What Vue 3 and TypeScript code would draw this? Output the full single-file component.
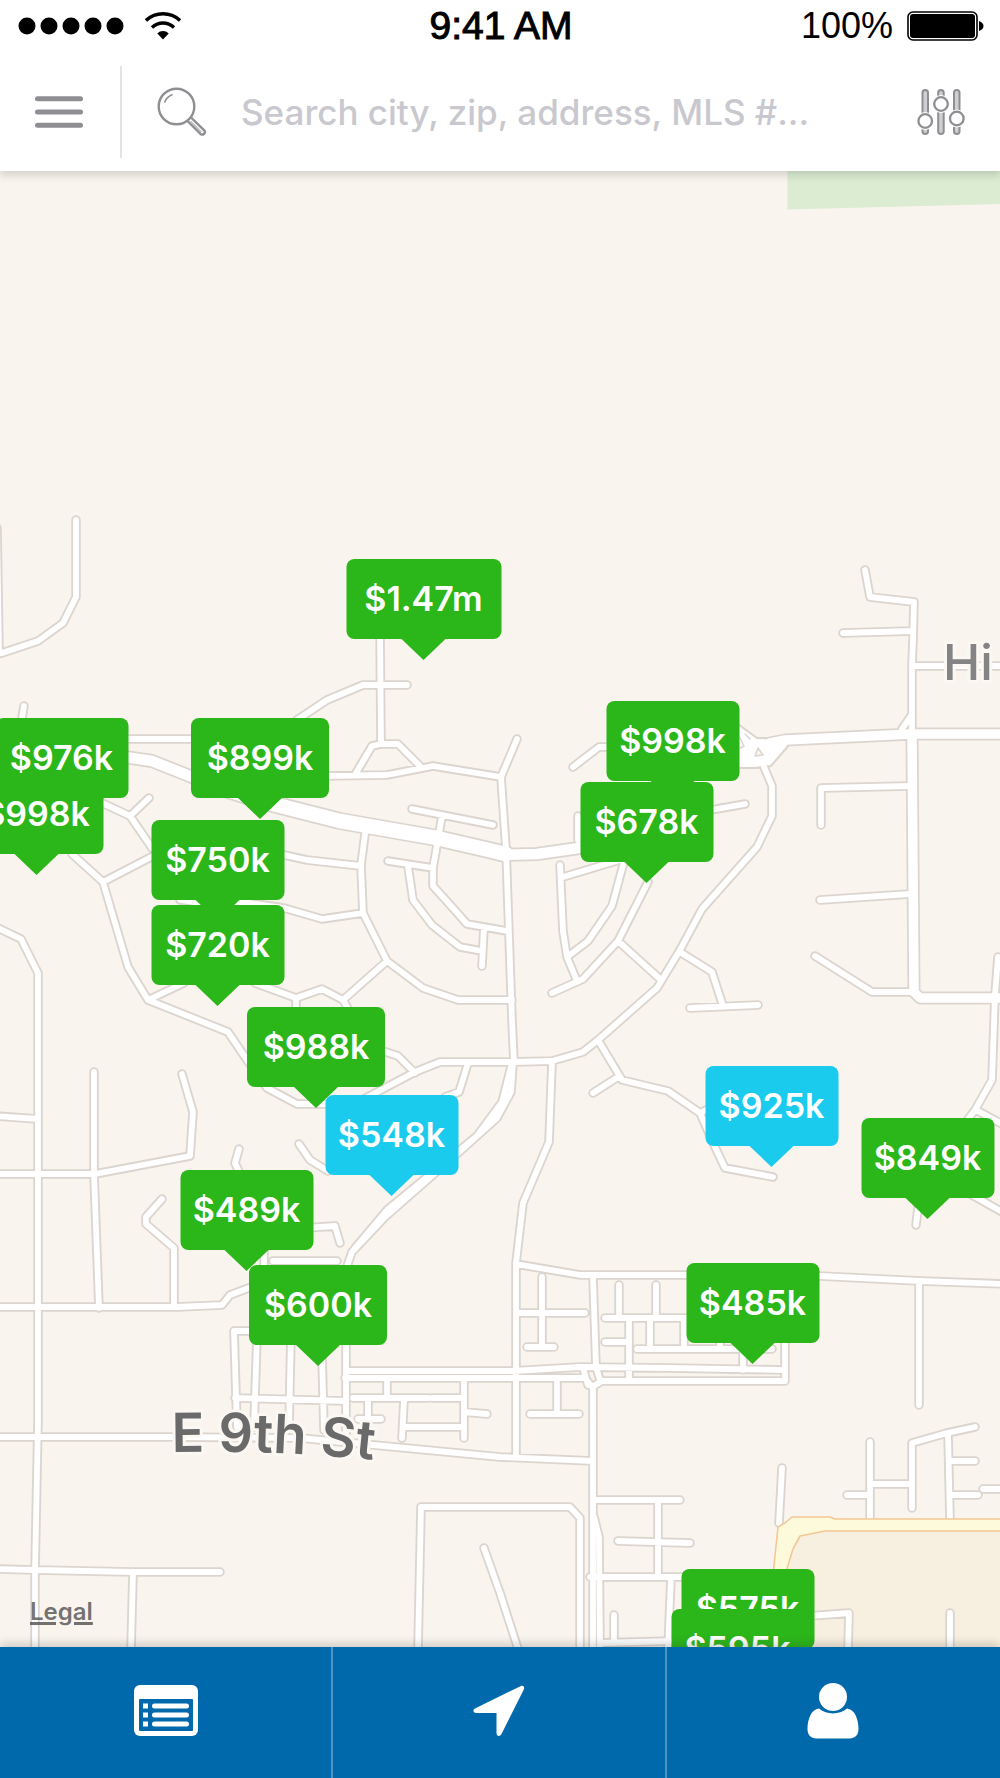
<script setup lang="ts">
import { ref } from 'vue'

interface Listing {
  price: string
  x: number
  y: number
  width: number
  viewed?: boolean
}

/* Map canvas: x runs 0-1000, y runs 171-1647 */
const MAP_TOP = 171
const MAP_WIDTH = 1000
const MAP_HEIGHT = 1476

/* x and y give the middle of each label's bottom edge */
const listings: Listing[] = [
  { price: '$1.47m', x: 423.5, y: 639, width: 155 },
  { price: '$976k', x: 61.5, y: 798, width: 133 },
  { price: '$998k', x: 36.5, y: 854, width: 133 },
  { price: '$899k', x: 260, y: 798, width: 138 },
  { price: '$750k', x: 217.5, y: 900, width: 133 },
  { price: '$720k', x: 217.5, y: 985, width: 133 },
  { price: '$998k', x: 672.5, y: 781, width: 133 },
  { price: '$678k', x: 646.5, y: 862, width: 133 },
  { price: '$988k', x: 316, y: 1087, width: 138 },
  { price: '$548k', x: 391.5, y: 1175, width: 133, viewed: true },
  { price: '$925k', x: 771.5, y: 1146, width: 133, viewed: true },
  { price: '$849k', x: 927.5, y: 1198, width: 133 },
  { price: '$489k', x: 246.5, y: 1250, width: 133 },
  { price: '$600k', x: 318, y: 1345, width: 138 },
  { price: '$485k', x: 752.5, y: 1343, width: 133 },
  { price: '$575k', x: 747.5, y: 1649, width: 133 },
  { price: '$595k', x: 737.5, y: 1689, width: 133 },
]

const place = (l: Listing) => ({
  left: `${(l.x / MAP_WIDTH) * 100}%`,
  top: `${((l.y - MAP_TOP) / MAP_HEIGHT) * 100}%`,
  width: `${l.width}px`,
})

const streets = [
  /* north west */
  'M-4 654L2 653L38 641L63 623L76 597V520', 'M-3 528L-1 650', 'M24 706L20 730', 'M100 739H260',
  'M100 802L130 816L152 848', 'M149 798L130 816', 'M72 854L103 882L155 855',
  'M103 882L128 967L148 1000L228 1032L247 1060L267 1088L297 1104H330', 'M148 1000L184 983',
  'M255 983L296 998L322 989L343 1000L387 961', 'M296 998V1015', 'M343 1000L350 1012',
  'M275 853L307 860L361 866', 'M180 900L200 903H250L284 908L322 919L363 913',
  'M-4 927L21 939L38 973V1420L35 1572V1650',
  'M297 720L327 700L363 685H407', 'M320 776L387 775L433 766L501 777L517 739',
  'M380 630L381 744L372 746L356 773', 'M381 744H398L420 766',
  'M501 777L506 849L512 1020L514 1063', 'M412 809L493 825', 'M442 816L433 868V886L452 907L467 924L507 931',
  'M388 861L433 868', 'M408 866L413 900L432 925L460 947L482 951', 'M484 927L482 966',
  'M365 834L361 865L363 913L387 961L423 988L458 1000H512', 'M380 1050L398 1056L415 1073',
  /* centre */
  'M362 1100L415 1072L440 1062H513L552 1061L583 1052L598 1040L657 988L680 950L702 909L757 847L772 816V786L762 762',
  'M468 1063L459 1092L445 1097', 'M513 1063L511 1092L497 1118L458 1153L385 1217L352 1252L345 1272',
  'M512 1063L502 1102L477 1136L387 1210L355 1248',
  'M552 1062L549 1142L523 1203L516 1263V1456',
  'M598 1040L622 1080L668 1091L700 1113L715 1147L725 1168L773 1177', 'M593 1093L618 1077', 'M700 1113L712 1107',
  'M516 1264L580 1275H700L820 1276L920 1281L1004 1284', 'M919 1282V1405',
  'M573 767L599 747H612', 'M578 816V840', 'M560 865L563 931L567 957L577 981', 'M563 877L623 859',
  'M625 858L612 906L588 941L567 957', 'M552 993L583 979L618 941L648 882', 'M618 941L660 979',
  'M680 952L712 972L723 1006', 'M690 1008L758 1005', 'M705 811L745 804',
  /* north east */
  'M865 570L870 597L914 602L913 640L912 666V730', 'M843 633L913 631', 'M913 666H1004', 'M902 729L911 716',
  'M821 825V788L910 786', 'M820 900L910 894', 'M815 956L872 992H912',
  'M998 957L995 995L992 1080L975 1110L966 1122', 'M976 1110L1004 1125', 'M965 1191L1004 1213', 'M919 1200L916 1225',
  /* west */
  'M-4 1116L38 1119', 'M-4 1174H95L190 1156L193 1112L182 1074', 'M94 1072V1174L99 1308', 'M-4 1307H177L222 1305L230 1295L254 1286',
  'M162 1199L146 1217V1224L174 1248V1307', 'M239 1149L235 1163L240 1174', 'M299 1144L310 1160L328 1171',
  'M305 1228L335 1226L340 1243', 'M273 1261H337', 'M264 1250V1275',
  'M256 1331H234L237 1427', 'M257 1335L254 1427', 'M291 1335L289 1427', 'M322 1355L324 1430', 'M235 1398L346 1401',
  /* grid */
  'M346 1335V1444', 'M346 1371H513L580 1367L670 1368L785 1370', 'M345 1378H585L592 1387L602 1381H785V1335',
  'M583 1368L588 1385', 'M593 1277L596 1367L600 1380', 'M593 1387V1650', 'M594 1517L599 1537L600 1650',
  'M353 1398H428', 'M432 1398H463', 'M387 1379V1398', 'M464 1378V1438', 'M464 1412L487 1414', 'M368 1398V1419',
  'M358 1419H381', 'M404 1400L402 1438', 'M403 1427H464', 'M557 1378V1414', 'M530 1414H579',
  'M542 1277V1347', 'M518 1313H585', 'M527 1347H554', 'M619 1285V1317', 'M656 1285V1317', 'M605 1318H700',
  'M605 1342H628', 'M629 1318V1379', 'M650 1318V1349', 'M637 1349H772', 'M684 1318V1349', 'M720 1330V1349', 'M743 1340V1370',
  /* south */
  'M-4 1437H173L300 1438L500 1457L593 1461', 'M-4 1569L35 1570L133 1572H220', 'M133 1573L131 1650',
  'M418 1650L421 1507H570L580 1518V1650', 'M484 1548L500 1593L519 1652', 'M597 1500H680', 'M658 1500V1577',
  'M618 1541L690 1543', 'M590 1577H700', 'M671 1577L668 1650', 'M614 1615V1642', 'M600 1643L672 1641',
  'M782 1468L779 1523', 'M870 1442V1521', 'M847 1495H870', 'M870 1484H912', 'M912 1508V1443L947 1433L975 1427',
  'M948 1433L950 1521', 'M949 1461H975', 'M950 1495H978', 'M983 1489H1004', 'M810 1616L849 1613L848 1650', 'M950 1613V1650',
].join('')

const avenues = ['M770 743L785 740L912 734H1004', 'M912 734L914 992L920 998H1004'].join('')
const highway = 'M215 786L273 804L340 821L437 838L506 854'
const highwayEnds = ['M118 756L152 761L215 786', 'M500 855L537 854L600 845'].join('')

const query = ref('')
</script>

<template>
  <div class="app">
    <header class="top">
      <div class="status">
        <div class="status-left">
          <svg width="106" height="18" viewBox="0 0 106 18" aria-hidden="true">
            <circle v-for="n in 5" :key="n" :cx="9 + (n - 1) * 22" cy="9" r="8.500" />
          </svg>
          <svg width="36" height="28" viewBox="0 0 36 28" fill="none" stroke="#000" stroke-width="3.400" aria-hidden="true">
            <path d="M1 8.500C10.500 -.5 25.500 -.5 35 8.500" />
            <path d="M7 15.500C13.500 9.500 22.500 9.500 29 15.500" />
            <path d="M12.300 21.500C15.500 18.200 20.500 18.200 23.700 21.500L18 27.500Z" fill="#000" stroke="none" />
          </svg>
        </div>
        <span class="time">9:41 AM</span>
        <div class="status-right">
          <span class="percent">100%</span>
          <svg width="77" height="30" viewBox="0 0 77 30" aria-hidden="true">
            <rect x="1" y="1" width="69" height="28" rx="5" fill="#fff" stroke="#000" stroke-width="1.600" />
            <rect x="3" y="3" width="65" height="24" rx="3" fill="#000" />
            <path d="M72 10C78 12 78 18 72 20Z" fill="#000" />
          </svg>
        </div>
      </div>

      <div class="search-row">
        <button class="menu" type="button" aria-label="Menu">
          <svg width="48" height="32" viewBox="0 0 48 32" aria-hidden="true">
            <path d="M2.500 2.800H45.500M2.500 16H45.500M2.500 29.300H45.500" stroke="#8f8f93" stroke-width="5" stroke-linecap="round" />
          </svg>
        </button>
        <label class="search">
          <svg width="50" height="50" viewBox="0 0 50 50" fill="none" stroke="#8f8f93" stroke-width="2.400" aria-hidden="true">
            <circle cx="19.500" cy="19.500" r="17.800" />
            <path d="M7.500 15.500C9 11.500 11.500 9 15.500 7.500" stroke-width="1.600" />
            <path d="M30 33.500L43.500 46.800C46 49 49.300 45.700 47.200 43.300L33.500 30" />
            <path d="M33.500 34L44.500 45" stroke-width="1" />
          </svg>
          <input v-model="query" type="text" placeholder="Search city, zip, address, MLS #..." aria-label="Search listings" />
        </label>
        <button class="filters" type="button" aria-label="Filters">
          <svg width="48" height="48" viewBox="0 0 48 48" fill="#cfcfd2" stroke="#8f8f93" stroke-width="2" aria-hidden="true">
            <rect x="5.500" y="2" width="5.500" height="44" rx="2.750" />
            <rect x="21.200" y="2" width="5.500" height="44" rx="2.750" />
            <rect x="37" y="2" width="5.500" height="44" rx="2.750" />
            <g stroke="#fff" fill="#fff" stroke-width="3">
              <circle cx="8.200" cy="33" r="7.500" /><circle cx="24" cy="16" r="7.500" /><circle cx="39.800" cy="30.500" r="7.500" />
            </g>
            <g fill="#fff" stroke-width="2.300">
              <circle cx="8.200" cy="33" r="6.800" /><circle cx="24" cy="16" r="6.800" /><circle cx="39.800" cy="30.500" r="6.800" />
            </g>
          </svg>
        </button>
      </div>
    </header>

    <main class="map">
      <div class="canvas">
        <svg class="terrain" viewBox="0 171 1000 1476" fill="none" stroke-linecap="round" stroke-linejoin="round" aria-hidden="true">
          <path d="M787.500 165H1001V204L787.500 209.500Z" fill="#dbecd2" />
          <path d="M786 1570L800 1536L825 1531H1001V1650H780Z" fill="#f7efdf" />
          <g stroke="#dcd5cf">
            <path :d="streets" stroke-width="9.500" />
            <path :d="avenues" stroke-width="13" />
            <path :d="highwayEnds" stroke-width="14" />
            <path :d="highway" stroke-width="18" />
            <path d="M738 724L757 738H786L790 744L771 766L757 768H738Z" stroke-width="2" />
          </g>
          <g stroke="#fff">
            <path :d="streets" stroke-width="5.800" />
            <path :d="avenues" stroke-width="9.500" />
            <path :d="highwayEnds" stroke-width="10.500" />
            <path :d="highway" stroke-width="14.500" />
          </g>
          <path d="M739 727L757 739.500H785L788 744L770 765L757 766.500H739Z" fill="#fff" />
          <path d="M758 748L763 755L755 756Z" fill="#f9f4ed" stroke="#dcd5cf" stroke-width="1.500" />
          <path d="M740 738L744 746L740 748M745 734L750 739" stroke="#dcd5cf" stroke-width="1.500" />
          <path
            d="M773 1575L778 1527L785 1523L792 1517H830L835 1519H1004V1531H825L800 1536L793 1549L785 1575Z"
            fill="#fdfadb" stroke="#f3c894" stroke-width="1.600"
          />
          <text x="943" y="680" class="place">Hi</text>
          <path id="street-curve" d="M172 1452C240 1451 310 1452 400 1463" />
          <text class="street"><textPath href="#street-curve">E 9th St</textPath></text>
        </svg>

        <button
          v-for="l in listings"
          :key="l.price + l.x"
          type="button"
          class="pin"
          :class="{ viewed: l.viewed }"
          :style="place(l)"
        >{{ l.price }}</button>

        <a href="#legal" class="legal">Legal</a>
      </div>
    </main>

    <nav class="tabs" aria-label="Main">
      <button type="button" aria-label="List">
        <svg width="64" height="51" viewBox="0 0 64 51" aria-hidden="true">
          <rect width="64" height="51" rx="6" fill="#fff" />
          <rect x="5" y="14" width="54" height="32" rx="1" fill="#0069ab" />
          <path d="M9 18.500h5v5h-5zM9 27.500h5v5h-5zM9 36.500h5v5h-5z" fill="#fff" />
          <path d="M20.500 21H52.500M20.500 30H52.500M20.500 39H52.500" stroke="#fff" stroke-width="5" stroke-linecap="round" />
        </svg>
      </button>
      <button type="button" aria-label="Nearby">
        <svg width="52" height="52" viewBox="0 0 52 52" aria-hidden="true">
          <path d="M47.500 1.200C50 0 52 2 50.800 4.500L28.500 49C27 52 23.500 51.500 23.500 48V28H3C0 28 -.5 24.700 2 23.400Z" fill="#fff" />
        </svg>
      </button>
      <button type="button" aria-label="Profile">
        <svg width="52" height="56" viewBox="0 0 52 56" fill="#fff" aria-hidden="true">
          <circle cx="26" cy="14" r="14" />
          <path d="M12 25.500C20 32 32 32 40 25.500C48 26 51.500 37 51.500 46C51.500 52 48 55.500 42.500 55.500H9.500C4 55.500 .5 52 .5 46C.5 37 4 26 12 25.500Z" />
        </svg>
      </button>
    </nav>
  </div>
</template>

<style>
body {
  margin: 0;
  background: #f9f4ed;
}
</style>

<style scoped>
.app {
  display: flex;
  flex-direction: column;
  min-height: 100vh;
  overflow: hidden;
  font-family: Inter, "Liberation Sans", sans-serif;
}

button {
  margin: 0;
  padding: 0;
  border: 0;
  background: none;
  font: inherit;
  cursor: pointer;
}

svg {
  display: block;
  flex: none;
}

.top {
  position: relative;
  z-index: 2;
  background: #fff;
  box-shadow: 0 4px 8px rgba(60, 60, 60, 0.2);
}

.status {
  display: grid;
  grid-template-columns: 1fr auto 1fr;
  align-items: center;
  height: 52px;
  padding: 0 16px 0 18px;
  font-family: "Liberation Sans", Arial, sans-serif;
  color: #000;
}

.status-left {
  display: flex;
  align-items: center;
  gap: 21px;
}

.time {
  font-size: 39px;
  -webkit-text-stroke: 1px #000;
}

.status-right {
  display: flex;
  align-items: center;
  justify-content: flex-end;
  gap: 14px;
}

.percent {
  font-size: 36px;
}

.search-row {
  display: flex;
  align-items: center;
  height: 119px;
}

.menu {
  display: flex;
  align-items: center;
  flex: none;
  box-sizing: border-box;
  width: 122px;
  height: 92px;
  padding-left: 35px;
  border-right: 2px solid #e4e4e6;
}

.search {
  display: flex;
  align-items: center;
  flex: 1;
  min-width: 0;
  gap: 34px;
  padding-left: 35px;
}

.search input {
  flex: 1;
  min-width: 0;
  padding: 0;
  border: 0;
  outline: 0;
  background: none;
  font: 500 35px/48px Inter, "Liberation Sans", sans-serif;
  color: #55555a;
}

.search input::placeholder {
  color: #c8c8ce;
  opacity: 1;
}

.filters {
  flex: none;
  padding: 0 35px;
}

.map {
  flex: 1;
  overflow: hidden;
  background: #f9f4ed;
}

.canvas {
  position: relative;
  width: 100%;
  aspect-ratio: 1000 / 1476;
  overflow: hidden;
}

.terrain {
  width: 100%;
  height: 100%;
}

.place,
.street {
  font-family: Inter, "Liberation Sans", sans-serif;
  paint-order: stroke;
  stroke: #fbf8f4;
  stroke-width: 6px;
}

.place {
  font-size: 50px;
  font-weight: 500;
  fill: #848484;
}

.street {
  font-size: 54px;
  font-weight: 600;
  fill: #6a6a6a;
}

.pin {
  position: absolute;
  height: 80px;
  border-radius: 8px;
  background: #2bb619;
  color: #fff;
  font-size: 34px;
  font-weight: 600;
  line-height: 80px;
  white-space: nowrap;
  transform: translate(-50%, -100%);
}

.pin::after {
  content: "";
  position: absolute;
  top: 100%;
  left: 50%;
  margin-left: -22px;
  border: 22px solid transparent;
  border-top: 21px solid #2bb619;
  border-bottom: 0;
}

.pin.viewed {
  background: #1acbee;
}

.pin.viewed::after {
  border-top-color: #1acbee;
}

.legal {
  position: absolute;
  left: 3%;
  bottom: 20px;
  color: rgba(80, 80, 80, 0.8);
  font-size: 24px;
  font-weight: 600;
  line-height: 30px;
  text-decoration: underline;
  text-decoration-thickness: 3px;
  text-underline-offset: 2px;
}

.tabs {
  position: relative;
  z-index: 2;
  display: grid;
  grid-template-columns: repeat(3, 1fr);
  height: 131px;
  background: #0069ab;
  box-shadow: 0 -4px 8px rgba(60, 60, 60, 0.2);
}

.tabs button {
  display: flex;
  align-items: center;
  justify-content: center;
  padding-bottom: 4px;
}

.tabs button:not(:last-child) {
  border-right: 2px solid #4d96c4;
}
</style>
